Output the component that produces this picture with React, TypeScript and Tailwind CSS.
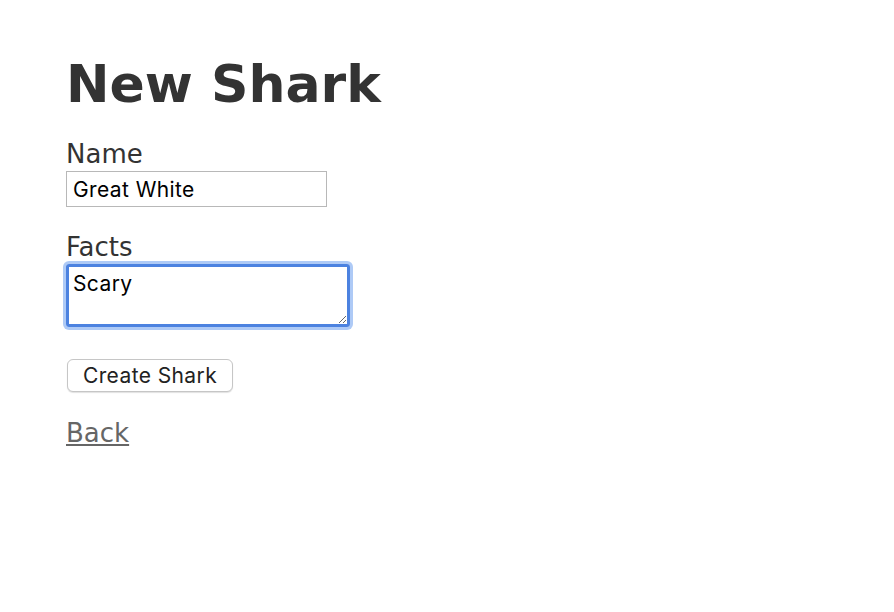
import React from 'react';

export default function App() {
  return (
    <div className="min-h-[612px] bg-white px-[66px] pt-[66px] text-[#333] font-['DejaVu_Sans',Verdana,sans-serif]">
      <h1 className="text-[52px] font-bold leading-[36px] mb-[34px]">New Shark</h1>

      <form className="flex flex-col items-start" onSubmit={(e) => e.preventDefault()}>
        <div className="flex flex-col items-start">
          <label className="text-[26px] leading-[36px]">Name</label>
          <input
            type="text"
            defaultValue="Great White"
            className="mt-[-1px] w-[261px] h-[36px] border border-[#b8b8b8] px-[6px] text-[21px] tracking-[0.4px] text-black outline-none font-['Inter',sans-serif]"
          />
        </div>

        <div className="flex flex-col items-start mt-[22px]">
          <label className="text-[26px] leading-[36px]">Facts</label>
          <textarea
            defaultValue="Scary"
            className="mt-[-1px] w-[284px] h-[63px] border-[3px] border-[#4c82e0] rounded-[3px] px-[4px] pt-[4px] text-[21px] tracking-[0.4px] leading-[26px] text-black outline-none shadow-[0_0_0_3px_#aecaf6] font-['Inter',sans-serif]"
          />
        </div>

        <button
          type="submit"
          className="mt-[32px] ml-px w-[166px] h-[33px] rounded-[6px] border border-[#c6c6c6] bg-white shadow-[0_1px_1px_rgba(0,0,0,0.12)] text-[21px] tracking-[0.4px] text-[#222] font-['Inter',sans-serif]"
        >
          Create Shark
        </button>
      </form>

      <a href="#" className="block mt-[23px] text-[26px] leading-[36px] text-[#666] underline w-fit">
        Back
      </a>
    </div>
  );
}
